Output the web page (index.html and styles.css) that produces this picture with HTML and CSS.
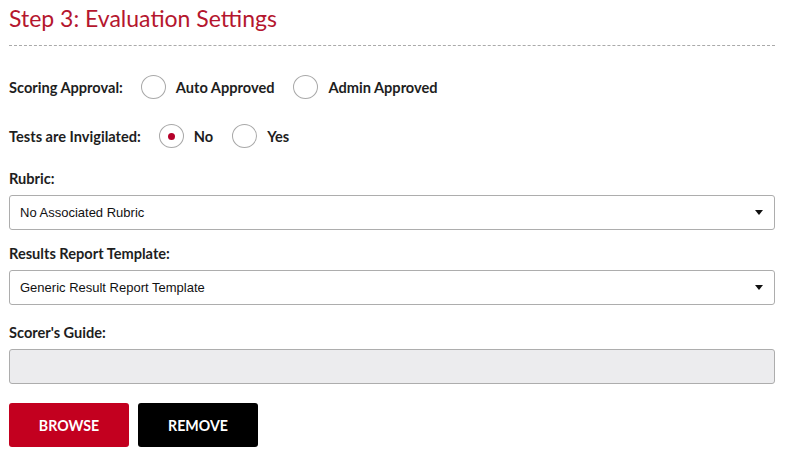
FILE: index.html
```html
<!DOCTYPE html>
<html>
<head>
<meta charset="utf-8">
<link rel="stylesheet" href="styles.css">
</head>
<body>
<div class="page">
  <h1 class="title">Step 3: Evaluation Settings</h1>
  <div class="rule"></div>

  <div class="radio-row row-scoring">
    <span class="label">Scoring Approval:</span>
    <span class="radio"></span><span class="opt">Auto Approved</span>
    <span class="radio"></span><span class="opt">Admin Approved</span>
  </div>

  <div class="radio-row row-tests">
    <span class="label">Tests are Invigilated:</span>
    <span class="radio checked"></span><span class="opt">No</span>
    <span class="radio"></span><span class="opt">Yes</span>
  </div>

  <div class="field field-rubric">
    <div class="field-label">Rubric:</div>
    <div class="select">
      <span class="select-text">No Associated Rubric</span>
      <span class="caret"></span>
    </div>
  </div>

  <div class="field field-results">
    <div class="field-label">Results Report Template:</div>
    <div class="select">
      <span class="select-text">Generic Result Report Template</span>
      <span class="caret"></span>
    </div>
  </div>

  <div class="field field-guide">
    <div class="field-label">Scorer's Guide:</div>
    <div class="file-box"></div>
  </div>

  <div class="buttons">
    <button class="btn btn-red">BROWSE</button>
    <button class="btn btn-black">REMOVE</button>
  </div>
</div>
</body>
</html>
```

FILE: styles.css
```css
html, body {
  margin: 0;
  padding: 0;
  background: #ffffff;
}
.page {
  width: 766px;
  padding: 0 9px;
  font-family: Lato, "Open Sans", sans-serif;
  color: #1e1e1e;
}
.title {
  margin: 0;
  padding-top: 4px;
  font-size: 23px;
  line-height: 28px;
  font-weight: 400;
  color: #b5162e;
}
.rule {
  margin-top: 13px;
  border-top: 1px dashed #aaaaaa;
}
.radio-row {
  display: flex;
  align-items: center;
  height: 26px;
  font-size: 14.6px;
}
.row-scoring { margin-top: 28px; }
.row-tests { margin-top: 23px; }
.label {
  font-weight: 700;
  margin-right: 18px;
}
.radio {
  box-sizing: border-box;
  width: 25px;
  height: 24px;
  border: 1px solid #a9a9a9;
  border-radius: 50%;
  display: flex;
  align-items: center;
  justify-content: center;
  margin-right: 10px;
}
.radio.checked::after {
  content: "";
  width: 7px;
  height: 7px;
  border-radius: 50%;
  background: #b5002a;
}
.opt {
  font-weight: 700;
  margin-right: 19px;
}
.field-rubric { margin-top: 21px; }
.field-results { margin-top: 15px; }
.field-guide { margin-top: 19px; }
.field-label {
  font-size: 14.6px;
  font-weight: 700;
  line-height: 18px;
  margin-bottom: 7px;
}
.select {
  box-sizing: border-box;
  height: 35px;
  border: 1px solid #adadad;
  border-radius: 3px;
  display: flex;
  align-items: center;
  justify-content: space-between;
  padding: 0 11px 0 10px;
  font-family: "Liberation Sans", Arial, sans-serif;
  font-size: 13px;
  color: #111;
}
.caret {
  width: 0;
  height: 0;
  border-left: 4px solid transparent;
  border-right: 4px solid transparent;
  border-top: 5px solid #111;
}
.file-box {
  box-sizing: border-box;
  height: 35px;
  border: 1px solid #adadad;
  border-radius: 3px;
  background: #ececee;
}
.buttons {
  display: flex;
  gap: 9px;
  margin-top: 19px;
}
.btn {
  width: 120px;
  height: 44px;
  border: none;
  border-radius: 3px;
  font-family: Lato, sans-serif;
  font-size: 14.2px;
  font-weight: 700;
  color: #ffffff;
  padding: 0;
}
.btn-red { background: #c3001f; }
.btn-black { background: #000000; }
```
